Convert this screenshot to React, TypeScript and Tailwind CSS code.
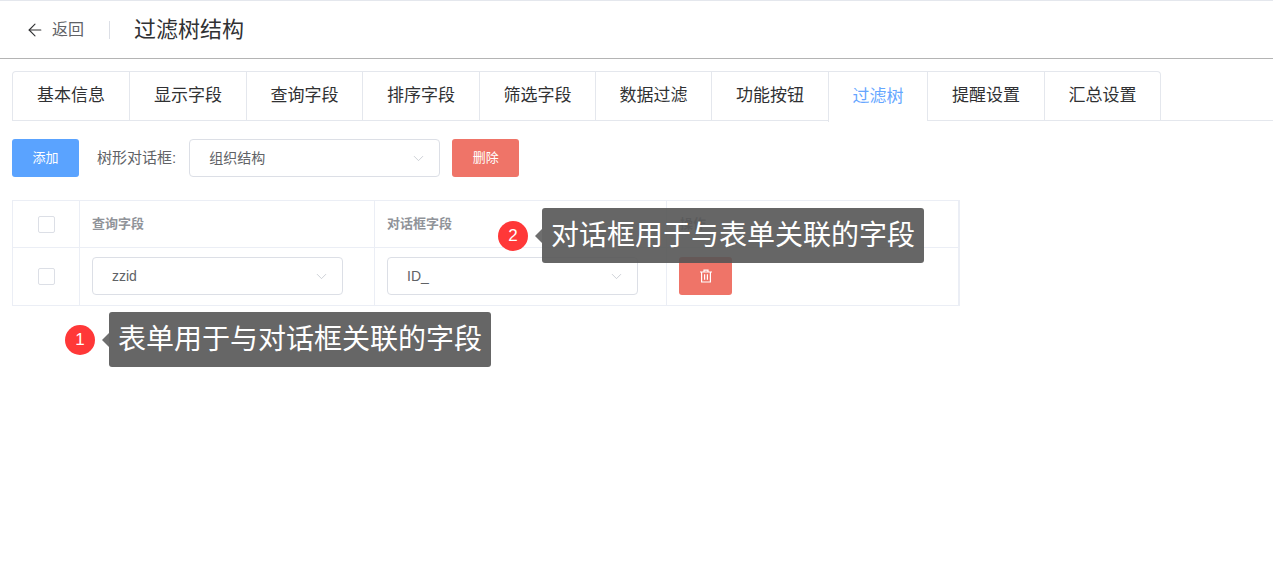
import { ArrowLeft, ChevronDown } from "lucide-react";

const tabs = ["基本信息", "显示字段", "查询字段", "排序字段", "筛选字段", "数据过滤", "功能按钮", "过滤树", "提醒设置", "汇总设置"];
const tabWidths = ["w-[116px]", "w-[117px]", "w-[116px]", "w-[117px]", "w-[116px]", "w-[116px]", "w-[117px]", "w-[99px]", "w-[117px]", "w-[116px]"];

function Select({ value, className }: { value: string; className: string }) {
  return (
    <div className={`flex items-center justify-between rounded-[4px] border border-[#dcdfe6] bg-white pl-[19px] pr-[12px] text-[14px] text-[#606266] ${className}`}>
      <span>{value}</span>
      <ChevronDown className="h-[17px] w-[17px] text-[#c0c4cc]" strokeWidth={1.1} />
    </div>
  );
}

function Checkbox() {
  return <div className="h-[17px] w-[17px] rounded-[2px] border border-[#dcdfe6] bg-white" />;
}

function Tip({ n, text, className }: { n: number; text: string; className: string }) {
  return (
    <div className={`absolute flex items-center ${className}`}>
      <div className="flex h-[30px] w-[30px] items-center justify-center rounded-full bg-[#ff3838] text-[17px] text-white">{n}</div>
      <div className="ml-[7px] h-0 w-0 border-y-[7px] border-r-[7px] border-y-transparent border-r-[#666666]/95" />
      <div className="flex h-[55px] items-center rounded-[3px] bg-[#555555]/90 px-[9px] text-[28px] whitespace-nowrap text-white">{text}</div>
    </div>
  );
}

export default function App() {
  return (
    <div className="relative h-[570px] w-[1273px] overflow-hidden bg-white font-['Liberation_Sans','Noto_Sans_CJK_SC',sans-serif]">
      <header className="flex h-[59px] items-center border-t border-b border-t-[#e4e7ed] border-b-[#b4b4b4] pl-[25px]">
        <ArrowLeft className="h-[20px] w-[20px] text-[#303133]" strokeWidth={1.3} />
        <span className="ml-[7px] w-[57px] text-[16px] text-[#606266]">返回</span>
        <div className="h-[18px] w-px bg-[#dcdfe6]" />
        <h1 className="ml-[24px] text-[22px] font-normal text-[#303133]">过滤树结构</h1>
      </header>

      <div className="mt-[12px] ml-[12px] flex h-[50px] border-b border-[#e4e7ed]">
        <div className="flex rounded-t-[4px] border border-b-0 border-[#e4e7ed]">
          {tabs.map((tab, i) => (
            <div
              key={tab}
              className={`flex items-center justify-center text-[17px] ${tabWidths[i]} ${i > 0 ? "border-l border-[#e4e7ed]" : ""} ${
                i === 7 ? "-mb-px h-[50px] bg-white text-[#66a6ff]" : "text-[#303133]"
              }`}
            >
              {tab}
            </div>
          ))}
        </div>
      </div>

      <div className="mt-[18px] ml-[12px] flex items-center">
        <button className="h-[38px] w-[67px] rounded-[3px] bg-[#5aa3ff] text-[13px] text-white">添加</button>
        <span className="ml-[18px] text-[15px] text-[#606266]">树形对话框:</span>
        <Select value="组织结构" className="ml-[13px] h-[38px] w-[251px]" />
        <button className="ml-[12px] h-[38px] w-[67px] rounded-[3px] bg-[#ef7468] text-[13px] text-white">删除</button>
      </div>

      <div className="mt-[23px] ml-[12px] w-[948px] border border-r-2 border-[#ebeef5]">
        <div className="flex h-[47px] border-b border-[#ebeef5] text-[13px] font-bold text-[#909399]">
          <div className="flex w-[67px] items-center justify-center border-r border-[#ebeef5]"><Checkbox /></div>
          <div className="flex w-[295px] items-center border-r border-[#ebeef5] pl-[12px]">查询字段</div>
          <div className="flex w-[292px] items-center border-r border-[#ebeef5] pl-[12px]">对话框字段</div>
          <div className="flex flex-1 items-center pl-[13px]">操作</div>
        </div>
        <div className="flex h-[57px]">
          <div className="flex w-[67px] items-center justify-center border-r border-[#ebeef5] pb-[1px]"><Checkbox /></div>
          <div className="flex w-[295px] items-center border-r border-[#ebeef5] pl-[12px] pb-[1px]">
            <Select value="zzid" className="h-[38px] w-[251px]" />
          </div>
          <div className="flex w-[292px] items-center border-r border-[#ebeef5] pl-[12px] pb-[1px]">
            <Select value="ID_" className="h-[38px] w-[251px]" />
          </div>
          <div className="flex flex-1 items-center pl-[12px] pb-[1px]">
            <button className="flex h-[38px] w-[53px] items-center justify-center rounded-[3px] bg-[#ef7468]">
              <svg viewBox="0 0 14 14" className="h-[14px] w-[14px]" fill="none" stroke="white" strokeWidth="1.2">
                <path d="M1 3h12M5 3V1.2h4V3M2.6 3v10h8.8V3M5.6 5.2v5.6M8.4 5.2v5.6" />
              </svg>
            </button>
          </div>
        </div>
      </div>

      <Tip n={1} text="表单用于与对话框关联的字段" className="top-[312px] left-[65px]" />
      <Tip n={2} text="对话框用于与表单关联的字段" className="top-[208px] left-[498px]" />
    </div>
  );
}
